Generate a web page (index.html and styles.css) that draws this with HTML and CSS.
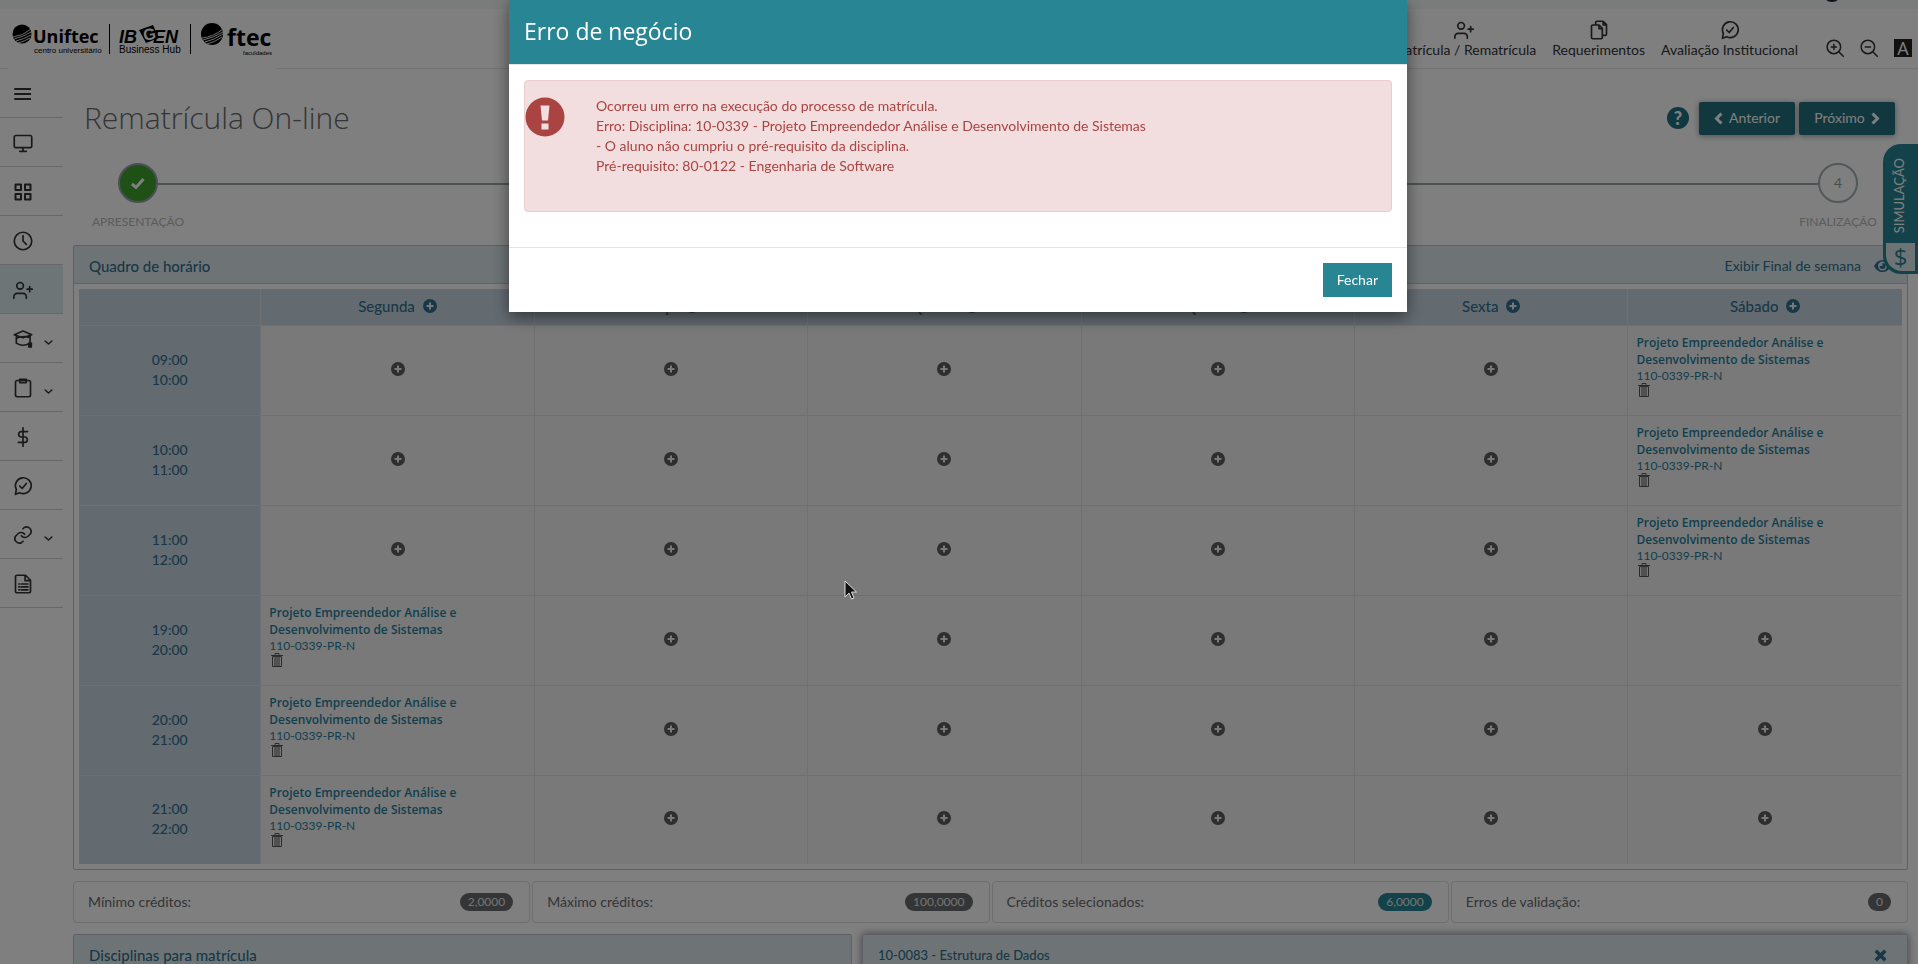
FILE: index.html
```
<!DOCTYPE html>
<html lang="pt-BR">
<head>
<meta charset="utf-8">
<title>Rematrícula On-line</title>
<link rel="stylesheet" href="styles.css">
</head>
<body>
<svg class="sprite" aria-hidden="true">
  <symbol id="i-user-plus" viewBox="0 0 24 24"><path d="M16 22v-2a4 4 0 0 0-4-4H5a4 4 0 0 0-4 4v2M20 8v6M23 11h-6"/><circle cx="8.500" cy="7" r="4"/></symbol>
  <symbol id="i-chat" viewBox="0 0 24 24"><path d="M3 22l1-6a9.500 9.500 0 1 1 4 4zM8 12l3 3 5-6"/></symbol>
  <symbol id="i-down" viewBox="0 0 24 24"><path d="M3 8l9 8 9-8"/></symbol>
  <symbol id="i-plus" viewBox="0 0 14 14"><circle cx="7" cy="7" r="7"/><path class="cut" d="M7 3.500v7M3.500 7h7"/></symbol>
  <symbol id="i-trash" viewBox="0 0 12 14"><path d="M4 1.500V.5h4v1M.5 2.500h11M1.500 4v9.500h9V4zM4 4.500v8.500M6 4.500v8.500M8 4.500v8.500"/></symbol>
</svg>

<div class="page">
  <div class="strip"><span class="avatar"></span></div>
  <header class="topbar">
    <a class="logo" href="#" aria-label="Uniftec, IBGEN, Ftec">
      <svg width="268" height="60" viewBox="0 0 268 60">
        <circle cx="14" cy="25" r="9.500" class="globe"/>
        <path class="rings" d="M5 28q10-1 18-8M6 30q9-2 17-7M8 32q8-2 15-6M10 34q7-2 12-5"/>
        <text x="25" y="34" class="brand">Uniftec</text>
        <text x="26" y="44" class="tiny">centro universitário</text>
        <path class="rule" d="M101.500 15v30M182.500 15v30"/>
        <text x="111" y="34" class="ibgen">IB</text>
        <text x="145" y="34" class="ibgen">EN</text>
        <path class="tag" d="M131 21l14-5 6 13-13 5z"/>
        <text x="135" y="31" class="ibgen-g" transform="rotate(-12 141 25)">G</text>
        <text x="111" y="44" class="hub">Business Hub</text>
        <circle cx="204" cy="25" r="11" class="globe"/>
        <path class="rings" d="M194 29q11-1 21-9M195 31q10-2 20-8M197 33q9-2 18-8M199 35q8-2 15-7"/>
        <text x="219" y="37" class="ftec">ftec</text>
        <text x="235" y="46" class="micro">faculdades</text>
      </svg>
    </a>
    <nav class="shortcuts">
      <a href="#"><svg class="ic" width="20" height="20"><use href="#i-user-plus"/></svg>Matrícula / Rematrícula</a>
      <a href="#"><svg class="ic" width="20" height="20" viewBox="0 0 24 24"><path d="M8 6V3q0-1.500 1.500-1.500H17l4 4V17q0 1.500-1.500 1.500H16M17 1.500V6h4M4.500 6H12l4 4v11q0 1.500-1.500 1.500h-10Q3 22.500 3 21V7.500Q3 6 4.500 6zM12 6v4.500h4"/></svg>Requerimentos</a>
      <a href="#"><svg class="ic" width="20" height="20"><use href="#i-chat"/></svg>Avaliação Institucional</a>
    </nav>
    <div class="tools">
      <button aria-label="Aumentar zoom"><svg class="ic" width="18" height="18" viewBox="0 0 24 24"><circle cx="10.500" cy="10.500" r="9"/><path d="M17 17l6 6M10.500 7v7M7 10.500h7"/></svg></button>
      <button aria-label="Diminuir zoom"><svg class="ic" width="18" height="18" viewBox="0 0 24 24"><circle cx="10.500" cy="10.500" r="9"/><path d="M17 17l6 6M7 10.500h7"/></svg></button>
      <button class="contrast" aria-label="Contraste">A</button>
    </div>
  </header>

  <div class="shell">
    <nav class="side">
      <button aria-label="Menu"><svg class="ic" width="18" height="18" viewBox="0 0 18 18"><path d="M2 4h16M2 9h16M2 14h16"/></svg></button>
      <a href="#" aria-label="Painel"><svg class="ic" width="20" height="20" viewBox="0 0 24 24"><rect x="1.500" y="3" width="21" height="14.500" rx="2"/><path d="M12 17.500V22M8 22h8"/></svg></a>
      <a href="#" aria-label="Módulos"><svg class="ic" width="20" height="20" viewBox="0 0 20 20"><path d="M2.500 2.500h5.500v5.500h-5.500zM12 2.500h5.500v5.500H12zM2.500 12h5.500v5.500h-5.500zM12 12h5.500v5.500H12z"/></svg></a>
      <a href="#" aria-label="Horários"><svg class="ic" width="20" height="20" viewBox="0 0 24 24"><circle cx="12" cy="12" r="10.500"/><path d="M12 5.500V12l4 4"/></svg></a>
      <a href="#" class="active" aria-label="Matrícula"><svg class="ic" width="20" height="20"><use href="#i-user-plus"/></svg></a>
      <a href="#" aria-label="Acadêmico"><svg class="ic" width="20" height="20" viewBox="0 0 24 24"><path d="M12 2.500L1.500 7 12 10.500 22.500 7zM4 8v9q8 5 16 0M4 11q8-3 16-1M20.500 7.500V20M19 17v4.500h3V17z"/></svg><svg class="ic down" width="9" height="9"><use href="#i-down"/></svg></a>
      <a href="#" aria-label="Secretaria"><svg class="ic" width="20" height="20" viewBox="0 0 24 24"><rect x="3" y="3" width="18" height="19.500" rx="2"/><path d="M8 1.500h8v4H8z"/></svg><svg class="ic down" width="9" height="9"><use href="#i-down"/></svg></a>
      <a href="#" aria-label="Financeiro"><svg class="ic" width="20" height="20" viewBox="0 0 24 24"><path d="M12 1v22M17.500 5.500H9.500a3.300 3.300 0 0 0 0 6.500h5a3.300 3.300 0 0 1 0 6.500H6.500"/></svg></a>
      <a href="#" aria-label="Avaliação"><svg class="ic" width="20" height="20"><use href="#i-chat"/></svg></a>
      <a href="#" aria-label="Links"><svg class="ic" width="20" height="20" viewBox="0 0 24 24"><path d="M10 13a5.500 5.500 0 0 0 8 .5l3-3A5.500 5.500 0 0 0 13.500 3L12 4.500M14 11a5.500 5.500 0 0 0-8-.5l-3 3a5.500 5.500 0 0 0 7.500 7.500l1.500-1.500"/></svg><svg class="ic down" width="9" height="9"><use href="#i-down"/></svg></a>
      <a href="#" aria-label="Documentos"><svg class="ic" width="20" height="20" viewBox="0 0 24 24"><path d="M5 1.500h10l6 6V21q0 1.500-1.500 1.500h-15Q3 22.500 3 21V3q0-1.500 2-1.500zM14.500 1.500V8H21M7 12h1M10 12h8M7 15.500h1M10 15.500h8M7 19h1M10 19h8"/></svg></a>
    </nav>

    <main class="main">
      <div class="heading">
        <h1>Rematrícula On-line</h1>
        <div class="actions">
          <button class="help" aria-label="Ajuda">?</button>
          <button class="btn"><svg width="9" height="13" viewBox="0 0 9 13"><path d="M7.500 1.500l-5 5 5 5"/></svg>Anterior</button>
          <button class="btn">Próximo<svg width="9" height="13" viewBox="0 0 9 13"><path d="M1.500 1.500l5 5-5 5"/></svg></button>
        </div>
      </div>

      <ol class="steps">
        <li><span class="dot done"><svg width="16" height="13" viewBox="0 0 16 13"><path d="M2 7l4 3.500L13.500 2"/></svg></span>APRESENTAÇÃO</li>
        <li><span class="dot">4</span>FINALIZAÇÃO</li>
      </ol>

      <section class="panel">
        <div class="panel-head">
          <h2>Quadro de horário</h2>
          <a href="#">Exibir Final de semana<svg width="17" height="12" viewBox="0 0 17 12"><path fill-rule="evenodd" d="M8.500 0Q14 0 17 6q-3 6-8.500 6T0 6q3-6 8.500-6zm0 1.500a4.500 4.500 0 1 0 .1 9 4.500 4.500 0 1 0-.1-9zM8.500 3a3 3 0 1 1-3 3h3z"/></svg></a>
        </div>
        <table class="grid">
          <thead><tr><th></th></tr></thead>
          <tbody></tbody>
        </table>
      </section>

      <dl class="credits">
        <div><dt>Mínimo créditos:</dt><dd>2,0000</dd></div>
        <div><dt>Máximo créditos:</dt><dd>100,0000</dd></div>
        <div><dt>Créditos selecionados:</dt><dd class="on">6,0000</dd></div>
        <div><dt>Erros de validação:</dt><dd>0</dd></div>
      </dl>

      <div class="lower">
        <section class="panel"><div class="panel-head"><h2>Disciplinas para matrícula</h2></div></section>
        <section class="panel raised"><div class="panel-head"><h3>10-0083 - Estrutura de Dados</h3><button aria-label="Remover"><svg width="13" height="13" viewBox="0 0 11 11"><path d="M1.500 1.500l8 8M9.500 1.500l-8 8"/></svg></button></div></section>
      </div>
    </main>
  </div>
  <button class="simulate"><span>SIMULAÇÃO</span><b>$</b></button>
</div>

<div class="backdrop"></div>
<div class="modal" role="dialog" aria-modal="true" aria-labelledby="modal-title">
  <h4 id="modal-title">Erro de negócio</h4>
  <div class="modal-body">
    <div class="alert">
      <svg width="40" height="40" viewBox="0 0 40 40"><circle cx="20" cy="20" r="19.500"/><path class="bang" d="M15.500 8.500h9l-1.500 15h-6zM16.500 26.500h7v6h-7z"/></svg>
      <p>Ocorreu um erro na execução do processo de matrícula.<br>Erro: Disciplina: 10-0339 - Projeto Empreendedor Análise e Desenvolvimento de Sistemas<br>- O aluno não cumpriu o pré-requisito da disciplina.<br>Pré-requisito: 80-0122 - Engenharia de Software</p>
    </div>
  </div>
  <div class="modal-foot"><button>Fechar</button></div>
</div>
<svg class="cursor" width="14" height="20" viewBox="0 0 14 20" aria-hidden="true"><path d="M1 1v16l4-4 2.500 6 2.500-1-2.500-6h5z"/></svg>
<script src="schedule.js"></script>
</body>
</html>
```
FILE: styles.css
```
* { box-sizing: border-box; }
body {
  margin: 0;
  overflow: hidden;
  background: #fff;
  color: #676a6c;
  font: 14px/20px Lato, "Open Sans", sans-serif;
}
h1, h2, h3, h4, p, ol, dl, dd { margin: 0; padding: 0; }
a { color: inherit; text-decoration: none; }
button { font: inherit; color: inherit; background: none; border: 0; padding: 0; }
svg { flex: none; }
.sprite { position: absolute; width: 0; height: 0; }
.page { position: relative; height: 100vh; overflow: hidden; }
.ic, #i-trash { fill: none; stroke: #333; stroke-width: 2; stroke-linecap: round; stroke-linejoin: round; }

/* top bar */
.strip { height: 9px; background: #f3f8f6; overflow: hidden; }
.avatar { display: block; width: 20px; height: 20px; margin: -18px 76px 0 auto; border-radius: 50%; background: #223; }
.topbar { display: flex; height: 60px; border-bottom: 1px solid #e4e4e4; padding: 0 6px 0 8px; }
.logo { width: 268px; height: 60px; background: #fff; }
.globe { fill: #000; }
.rings { fill: none; stroke: #ddd; stroke-width: 1; }
.rule { stroke: #000; }
.logo text { fill: #000; font-family: "Liberation Sans Narrow", "Liberation Sans", sans-serif; }
.logo .brand { font: bold 18px "Open Sans", sans-serif; }
.logo .ftec { font: bold 23px "Open Sans", sans-serif; }
.logo .tiny { font-size: 8px; }
.logo .micro { font-size: 6px; }
.logo .hub { font-size: 10px; }
.logo .ibgen { font: italic bold 18px "Liberation Sans", sans-serif; }
.logo .ibgen-g { font: bold 16px "Liberation Sans", sans-serif; fill: #fff; }
.shortcuts { display: flex; gap: 16px; margin-left: auto; padding-top: 11px; color: #333; }
.shortcuts a { display: flex; flex-direction: column; align-items: center; }
.tools { display: flex; align-items: center; gap: 16px; margin-left: 28px; padding-top: 19px; height: 58px; }
.tools button { display: flex; }
.tools .contrast { display: block; width: 18px; height: 18px; background: #222; color: #fff; font: 18px/18px "Open Sans", sans-serif; }

/* side menu */
.shell { display: flex; }
.side { width: 63px; flex: none; }
.side > * { display: flex; align-items: center; width: 100%; height: 49px; padding: 2px 0 0 13px; border-bottom: 1px solid #d0d0d0; }
.side .active { background: #dcebec; }
.side .down { margin: 6px 0 0 11px; stroke-width: 4; }

/* heading and steps */
.main { flex: 1; min-width: 0; padding: 26px 10px 0 10px; }
.heading { display: flex; justify-content: space-between; align-items: center; padding: 0 13px 0 11px; height: 46px; }
h1 { font: 300 30px/40px "Open Sans", sans-serif; }
.actions { display: flex; align-items: center; gap: 4px; }
.help { width: 22px; height: 22px; margin-right: 6px; border-radius: 50%; background: #1f7080; color: #fff; font-weight: 900; font-size: 18px; line-height: 22px; }
.btn { display: flex; align-items: center; justify-content: center; gap: 6px; width: 96px; height: 33px; border-radius: 2px; background: #22707f; color: #fff; box-shadow: 0 1px 6px rgba(0, 0, 0, .4); }
.btn svg, .done svg { fill: none; stroke: #fff; stroke-width: 3; }
.steps { position: relative; display: flex; justify-content: space-between; list-style: none; height: 104px; padding: 22px 15px 0 10px; font-size: 12px; color: #b4b8ba; }
.steps::before { content: ""; position: absolute; left: 65px; right: 70px; top: 42px; height: 2px; background: #9aa6aa; }
.steps li { position: relative; display: flex; flex-direction: column; align-items: center; gap: 9px; width: 110px; }
.dot { display: flex; align-items: center; justify-content: center; width: 40px; height: 40px; border: 2px solid #a5b0b4; border-radius: 50%; background: #fff; color: #999; font-size: 14px; }
.dot.done { background: #3fa32c; border-color: #9aa0b0; }

/* panels */
.panel { border: 1px solid #bcbed0; border-radius: 2px; }
.panel-head { display: flex; justify-content: space-between; align-items: center; height: 38px; padding: 2px 16px 0 15px; background: #dce8ec; border-bottom: 1px solid #bcc8d0; color: #31708f; }
.panel-head h2 { font-size: 15px; font-weight: 500; line-height: 20px; }
.panel-head h3 { font-size: 13px; font-weight: 500; line-height: 20px; }
.panel-head a { display: flex; align-items: center; gap: 13px; }
.panel-head svg { fill: #31708f; }
.grid { width: calc(100% - 10px); margin: 5px; table-layout: fixed; border-collapse: separate; border-spacing: 0; background: #f2f2f2; }
.grid th { background: #c7d6e3; color: #31708f; font-weight: 500; border-bottom: 1px solid #e0e0e0; }
.grid th, .grid td { padding: 0; border-right: 1px solid #e0e0e0; }
.grid tr > :first-child { width: 10%; }
.grid tr > :last-child { border-right: 0; }
.grid thead th { height: 37px; padding-bottom: 2px; font-size: 15px; }
.grid td, .grid tbody th { height: 90px; border-bottom: 1px solid #e0e0e0; text-align: center; vertical-align: middle; }
.grid tbody th { padding-bottom: 2px; }
.grid tbody tr:last-child > * { height: 88px; border-bottom: 0; }
.grid button { display: inline-flex; fill: #5c5c5c; }
.grid thead button { margin-left: 8px; fill: #31708f; vertical-align: -1px; }
.cut { stroke: #f2f2f2; stroke-width: 2; }
.grid td.class { padding: 8px 8px 0; text-align: left; vertical-align: top; color: #1f7f9c; font-size: 12px; line-height: 15px; }
.grid td.class strong { display: block; max-width: 200px; font: 600 12px/17px "Open Sans", sans-serif; }
.grid td.class button { display: flex; margin-left: 2px; }
#i-trash { stroke: #555; stroke-width: 1; }

/* totals and lower panels */
.credits { display: grid; grid-template-columns: repeat(4, 1fr); gap: 2px; margin: 11px 0; }
.credits div { display: flex; justify-content: space-between; align-items: center; height: 42px; padding: 0 16px 0 14px; border: 1px solid #dcdcdc; border-radius: 4px; }
.credits dd { height: 18px; padding: 0 8px; border-radius: 9px; background: #676a6c; color: #e8e8e8; font-size: 12px; line-height: 18px; }
.credits .on { background: #278594; }
.lower { display: grid; grid-template-columns: 779fr 1046fr; gap: 10px; }
.lower .panel-head { height: 39px; }
.lower .raised { box-shadow: 0 0 8px rgba(0, 0, 0, .5); }
.raised .panel-head { padding-right: 20px; }
.raised svg { display: block; stroke: #31708f; stroke-width: 3; }

/* simulation tab */
.simulate { position: absolute; right: 0; top: 144px; display: flex; flex-direction: column; align-items: center; justify-content: space-between; width: 35px; height: 130px; padding: 14px 3px 3px; border-radius: 18px 0 0 18px; background: #278594; color: #fff; }
.simulate span { margin-right: 3px; writing-mode: vertical-rl; transform: rotate(180deg); font-size: 13px; line-height: 20px; }
.simulate b { width: 29px; height: 28px; border-radius: 0 0 0 16px; background: #dce8ec; color: #278594; font: 24px/28px "Open Sans", sans-serif; }

/* dialog */
.backdrop { position: fixed; inset: 0; background: rgba(0, 0, 0, .5); }
.modal { position: fixed; top: 0; left: 0; right: 2px; width: 898px; max-width: 100%; margin: 0 auto; background: #fff; box-shadow: 0 5px 15px rgba(0, 0, 0, .5); }
.modal h4 { padding: 15px 15px 17px; border-bottom: 1px solid #e5e5e5; background: #278594; color: #fff; font: 23px/32px "Open Sans", sans-serif; }
.modal-body { padding: 15px 15px 35px; }
.alert { display: flex; gap: 31px; align-items: flex-start; min-height: 132px; padding: 15px 1px 15px 0; border: 1px solid #ebccd1; border-radius: 4px; background: #f2dede; color: #a94442; }
.alert svg { margin-top: 1px; fill: #a94442; }
.alert .bang { fill: #f2dede; }
.modal-foot { display: flex; justify-content: flex-end; padding: 15px; border-top: 1px solid #e5e5e5; }
.modal-foot button { height: 34px; padding: 0 14px; background: #278594; color: #fff; }
.cursor { position: fixed; left: 844px; top: 580px; fill: #111; stroke: #ddd; stroke-width: 1; }
```
FILE: schedule.js
```
const days = ["Segunda", "Terça", "Quarta", "Quinta", "Sexta", "Sábado"];
const slots = [["09:00", "10:00", 5], ["10:00", "11:00", 5], ["11:00", "12:00", 5], ["19:00", "20:00", 0], ["20:00", "21:00", 0], ["21:00", "22:00", 0]];
const plus = label => `<button aria-label="${label}"><svg width="14" height="14"><use href="#i-plus"/></svg></button>`;
const booked = `<td class="class"><strong>Projeto Empreendedor Análise e Desenvolvimento de Sistemas</strong>110-0339-PR-N<button aria-label="Remover"><svg width="12" height="14"><use href="#i-trash"/></svg></button></td>`;
document.querySelector(".grid thead tr").innerHTML += days.map(d => `<th scope="col">${d}${plus("Adicionar " + d)}</th>`).join("");
document.querySelector(".grid tbody").innerHTML = slots.map(([from, to, day]) =>
  `<tr><th scope="row">${from}<br>${to}</th>` +
  days.map((d, i) => i === day ? booked : `<td>${plus(d + " " + from)}</td>`).join("") + "</tr>").join("");
```
